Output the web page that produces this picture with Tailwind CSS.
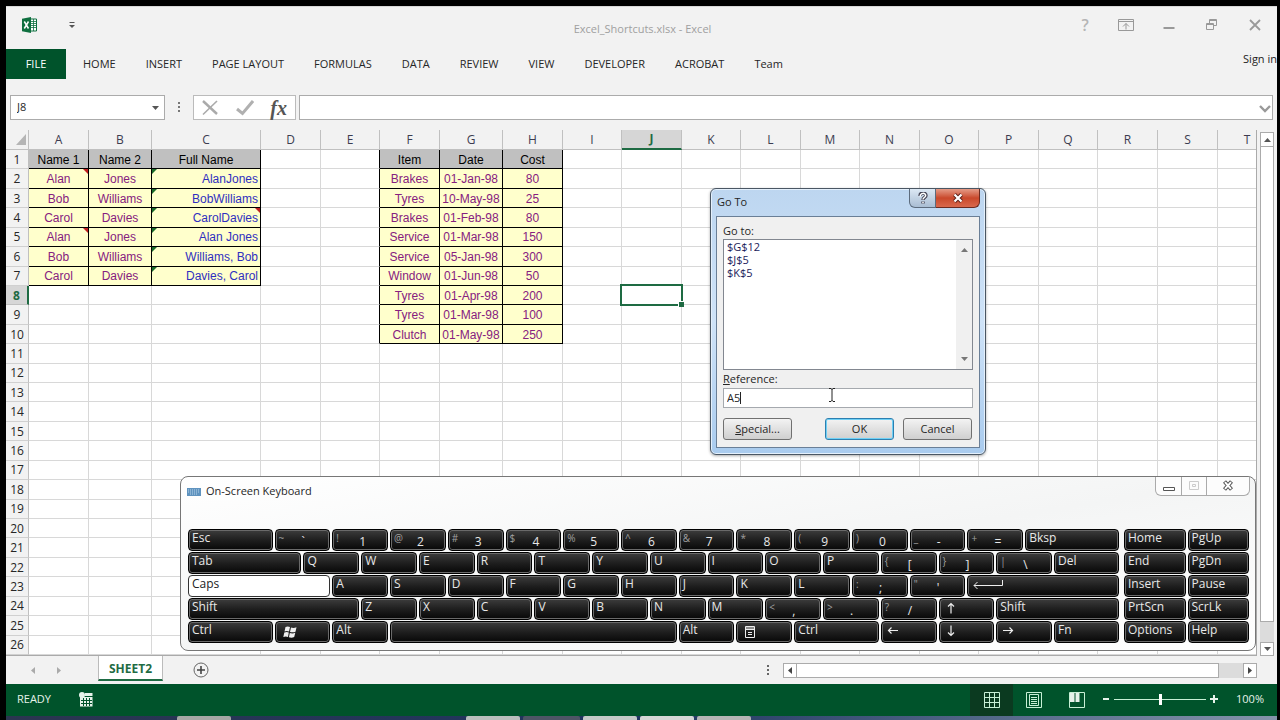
<!DOCTYPE html>
<html lang="en">
<head>
  <meta charset="UTF-8">
  <title>Excel_Shortcuts.xlsx - Excel</title>
  <script src="https://cdn.jsdelivr.net/npm/@tailwindcss/browser@4"></script>
</head>
<body class="relative h-screen overflow-hidden bg-black pt-[6px] pl-[6px] pr-[3px] flex flex-col font-['Open_Sans',sans-serif] text-[11px] text-[#262626] cursor-default">

  <!-- title bar -->
  <header class="h-[43px] shrink-0 bg-[#f2f2f2] border-t border-[#d8d8d8] flex items-center pl-4 pr-[14px]">
    <div class="flex flex-1 items-center gap-[31px] pb-[6px]">
      <svg class="w-[15px] h-4" viewBox="0 0 15 16">
        <path d="M8 2h6.500v12H8z" fill="#fff" stroke="#0f7040" />
        <path d="M9 4.500h5M9 6.500h5M9 8.500h5M9 10.500h5M11.500 2v12" stroke="#0f7040" stroke-width=".8" />
        <path d="M0 1.800L9 0v16L0 14.200z" fill="#0f7040" />
        <path d="M2.300 4.500l4.200 7M6.500 4.500l-4.200 7" stroke="#fff" stroke-width="1.500" />
      </svg>
      <button aria-label="Customize Quick Access Toolbar">
        <svg class="w-2 h-2" viewBox="0 0 8 8"><path d="M1.500 1.500h5" stroke="#555" /><path d="M1 4h6L4 7z" fill="#555" /></svg>
      </button>
    </div>
    <h1 class="pt-[2px] text-[#a0a0a0]">Excel_Shortcuts.xlsx - Excel</h1>
    <div class="flex flex-1 items-center justify-end gap-[27px] pb-[6px] text-[#999]">
      <button aria-label="Help" class="w-3 text-base leading-4 font-semibold text-[#b5b5b5]">?</button>
      <button aria-label="Ribbon Display Options">
        <svg class="w-4 h-4" viewBox="0 0 16 16" fill="none" stroke="currentColor"><path d="M.5 2.500h15v11H.5zM.5 4.500h15M8 12.500V6.500M5 9.500l3-3 3 3" /></svg>
      </button>
      <button aria-label="Minimize">
        <svg class="w-4 h-4" viewBox="0 0 16 16"><path d="M2.500 11h11" stroke="currentColor" stroke-width="2" /></svg>
      </button>
      <button aria-label="Restore Down">
        <svg class="w-4 h-4" viewBox="0 0 16 16" fill="none" stroke="currentColor"><path d="M2.500 6.500h7v6h-7zM2.500 7.500h7M5.500 6V2.500h7v6H10M5.500 3.500h7" /></svg>
      </button>
      <button aria-label="Close">
        <svg class="w-4 h-4" viewBox="0 0 16 16"><path d="M3 3l10 10M13 3L3 13" stroke="currentColor" stroke-width="1.800" /></svg>
      </button>
    </div>
  </header>

  <!-- ribbon tabs -->
  <nav class="h-[30px] shrink-0 bg-[#f2f2f2] flex items-stretch overflow-hidden">
    <button class="w-[60px] pt-px bg-[#00532b] text-white">FILE</button>
    <div id="tabs" class="flex-1 flex items-stretch pl-[2px]"></div>
    <a href="#" class="self-start whitespace-nowrap pt-[2px] text-[#222]">Sign in</a>
  </nav>

  <!-- formula bar -->
  <div class="h-[51px] shrink-0 bg-[#f2f2f2] flex items-start pt-4 pl-1 pr-1">
    <div class="w-[155px] h-[25px] bg-white border border-[#ababab] flex items-center">
      <input aria-label="Name Box" value="J8" class="flex-1 min-w-0 pl-[6px] outline-none">
      <button aria-label="Open Name Box list" class="px-[5px]"><svg class="w-[7px] h-1" viewBox="0 0 7 4"><path d="M0 0h7L3.500 4z" fill="#555" /></svg></button>
    </div>
    <svg class="w-7 h-[25px]" viewBox="0 0 28 25"><path d="M13 7h2v2h-2zM13 11h2v2h-2zM13 15h2v2h-2z" fill="#777" /></svg>
    <div class="w-[103px] h-[25px] bg-white border border-[#bbb] flex items-center justify-between pl-2 pr-2">
      <button aria-label="Cancel entry"><svg class="w-[17px] h-[17px]" viewBox="0 0 17 17"><path d="M1 2l14 13" stroke="#aaa" stroke-width="2.400" /><path d="M15 2L1 15.500" stroke="#aaa" stroke-width="1.600" /></svg></button>
      <button aria-label="Enter"><svg class="w-[18px] h-[17px]" viewBox="0 0 18 17"><path d="M1 10l5.500 4.500L17 2" fill="none" stroke="#b0b0b0" stroke-width="3" /></svg></button>
      <button aria-label="Insert Function" class="font-['Liberation_Serif',serif] italic font-bold text-[20px] leading-5 text-[#555]">fx</button>
    </div>
    <div class="ml-[3px] flex-1 h-[25px] bg-white border border-[#ababab] flex items-center">
      <input aria-label="Formula Bar" class="flex-1 outline-none">
      <button aria-label="Expand Formula Bar" class="pr-px"><svg class="w-3 h-3" viewBox="0 0 12 12"><path d="M1 4l5 5 5-5" fill="none" stroke="#999" stroke-width="2.400" /></svg></button>
    </div>
  </div>

  <!-- worksheet -->
  <main class="flex-1 min-h-0 flex bg-[#f2f2f2]">
    <div class="flex-1 min-w-0 overflow-hidden border-b border-r border-[#aaa]">
      <table id="sheet" class="w-full h-full table-fixed border-separate border-spacing-0 bg-white text-xs leading-4">
        <colgroup>
          <col class="w-[23px]"><col class="w-[60px]"><col class="w-[63px]"><col class="w-[109px]"><col class="w-[60px]">
          <col class="w-[59px]"><col class="w-[60px]"><col class="w-[63px]"><col class="w-[60px]"><col class="w-[59px]">
          <col class="w-[60px]"><col class="w-[59px]"><col class="w-[60px]"><col class="w-[59px]"><col class="w-[60px]">
          <col class="w-[59px]"><col class="w-[60px]"><col class="w-[59px]"><col class="w-[60px]"><col class="w-[60px]">
          <col class="w-[59px]">
        </colgroup>
        <thead></thead>
        <tbody></tbody>
      </table>
    </div>
    <div class="w-5 shrink-0 pt-[2px] pl-[3px] pr-[3px] flex flex-col">
      <button aria-label="Scroll up" class="h-[15px] border border-[#ababab] bg-white flex items-center justify-center"><svg class="w-[7px] h-1" viewBox="0 0 7 4"><path d="M0 4h7L3.500 0z" fill="#555" /></svg></button>
      <div class="flex-1 bg-[#dcdcdc] pb-5"><div class="h-full border border-t-0 border-[#ababab] bg-white"></div></div>
      <button aria-label="Scroll down" class="h-[14px] border border-[#ababab] bg-white flex items-center justify-center"><svg class="w-[7px] h-1" viewBox="0 0 7 4"><path d="M0 0h7L3.500 4z" fill="#555" /></svg></button>
    </div>
  </main>

  <!-- sheet tabs and horizontal scrollbar -->
  <div class="h-7 shrink-0 bg-[#f2f2f2] flex">
    <div class="w-[92px] flex items-center justify-center gap-[22px] pr-3">
      <button aria-label="Previous sheet"><svg class="w-1 h-[7px]" viewBox="0 0 4 7"><path d="M4 0v7L0 3.500z" fill="#aaa" /></svg></button>
      <button aria-label="Next sheet"><svg class="w-1 h-[7px]" viewBox="0 0 4 7"><path d="M0 0v7l4-3.500z" fill="#aaa" /></svg></button>
    </div>
    <button class="w-[65px] h-[25px] pt-[3px] bg-white border-x border-[#bbb] border-b-2 border-b-[#1e6b43] font-bold text-xs text-[#1e6b43]">SHEET2</button>
    <button aria-label="New sheet" class="ml-[30px]"><svg class="w-4 h-4" viewBox="0 0 16 16" fill="none" stroke="#666"><circle cx="8" cy="8" r="7" /><path d="M8 4v8M4 8h8" stroke="#444" stroke-width="1.600" /></svg></button>
    <div class="flex-1"></div>
    <svg class="w-[30px] h-7" viewBox="0 0 30 28"><path d="M14 9h2v2h-2zM14 13h2v2h-2zM14 17h2v2h-2z" fill="#666" /></svg>
    <div class="w-[474px] mt-[7px] mr-5 h-[15px] flex bg-[#dcdcdc]">
      <button aria-label="Scroll left" class="w-[14px] border border-[#ababab] bg-white flex items-center justify-center"><svg class="w-1 h-[7px]" viewBox="0 0 4 7"><path d="M4 0v7L0 3.500z" fill="#444" /></svg></button>
      <div class="flex-1 pr-6"><div class="h-full border border-l-0 border-[#ababab] bg-white"></div></div>
      <button aria-label="Scroll right" class="w-[14px] border border-[#ababab] bg-white flex items-center justify-center"><svg class="w-1 h-[7px]" viewBox="0 0 4 7"><path d="M0 0v7l4-3.500z" fill="#444" /></svg></button>
    </div>
  </div>

  <!-- status bar -->
  <footer class="h-8 shrink-0 bg-[#00532b] text-[#e6f2ea] flex items-stretch pl-[11px] pr-[13px] pb-[2px]">
    <span class="self-center w-[62px]">READY</span>
    <button aria-label="Record macro">
      <svg class="w-[14px] h-[15px]" viewBox="0 0 14 15"><path d="M1 5h12.500v9.500H1z" fill="#e6f2ea" /><path d="M6 1h7.500v3H6z" fill="#e6f2ea" /><path d="M2 8.500h11M2 11.500h11M4.500 6v8M7.500 6v8M10.500 6v8" stroke="#00532b" /><circle cx="3" cy="3" r="3" fill="#e6f2ea" /></svg>
    </button>
    <div class="flex-1"></div>
    <button aria-label="Normal" class="w-[43px] -mb-[2px] bg-[#0b3a20] flex items-center justify-center">
      <svg class="w-4 h-4" viewBox="0 0 16 16" fill="none" stroke="#c8f0d6"><path d="M.5.5h15v15H.5zM5.500.5v15M10.500.5v15M.5 5.500h15M.5 10.500h15" /></svg>
    </button>
    <button aria-label="Page Layout" class="w-[42px] -mb-[2px] flex items-center justify-center">
      <svg class="w-4 h-4" viewBox="0 0 16 16" fill="none" stroke="#c8f0d6"><path d="M.5.5h15v15H.5zM3.500 2.500h9v11h-9zM5 5.500h6M5 7.500h6M5 9.500h6M5 11.500h6" /></svg>
    </button>
    <button aria-label="Page Break Preview" class="w-[43px] -mb-[2px] flex items-center justify-center">
      <svg class="w-4 h-4" viewBox="0 0 16 16" fill="none" stroke="#c8f0d6"><path d="M.5.5h15v15H.5z" /><path d="M1 1h4.500v9H1zM6.500 1h4v9h-4z" fill="#e6f2ea" stroke="none" /></svg>
    </button>
    <div class="ml-1 mr-[18px] flex items-center gap-1">
      <button aria-label="Zoom out"><svg class="w-2 h-2" viewBox="0 0 8 8"><path d="M1 4h6" stroke="#e6f2ea" stroke-width="2" /></svg></button>
      <input type="range" aria-label="Zoom" min="10" max="190" value="100" class="w-[92px] h-4 appearance-none bg-transparent [&::-webkit-slider-runnable-track]:h-px [&::-webkit-slider-runnable-track]:bg-[#c8f0d6] [&::-webkit-slider-thumb]:appearance-none [&::-webkit-slider-thumb]:w-[3px] [&::-webkit-slider-thumb]:h-[11px] [&::-webkit-slider-thumb]:-mt-[5px] [&::-webkit-slider-thumb]:bg-white">
      <button aria-label="Zoom in"><svg class="w-2 h-2" viewBox="0 0 8 8"><path d="M0 4h8M4 0v8" stroke="#e6f2ea" stroke-width="2" /></svg></button>
    </div>
    <button>100%</button>
  </footer>

  <!-- edge of the taskbar -->
  <div class="h-1 shrink-0 bg-gradient-to-r from-[#2b3550] via-[#1f3560] to-[#8494ab] flex gap-[3px] pl-[171px]">
    <div class="w-[54px] bg-[#a5a8a5] rounded-t-xs"></div>
    <div class="w-[229px]"></div>
    <div class="w-[54px] bg-[#b9bfbd] rounded-t-xs"></div>
    <div class="w-[57px] bg-[#4e5566] rounded-t-xs"></div>
    <div class="w-[54px] bg-[#c3c9c7] rounded-t-xs"></div>
    <div class="w-[54px] bg-[#d5d8d6] rounded-t-xs"></div>
    <div class="w-[54px] bg-[#b5b5b5] rounded-t-xs"></div>
  </div>

  <!-- Go To dialog -->
  <section role="dialog" aria-label="Go To" class="absolute left-[710px] top-[188px] w-[276px] flex flex-col rounded-md border border-[#4a5663] bg-gradient-to-b from-[#bdd6f0] via-[#cfe3f8] to-[#a9cbee] px-[5px] pb-[6px] shadow-[inset_0_0_0_1px_#e4f0fc,0_1px_3px_#0005]">
    <div class="h-[27px] flex items-start">
      <h2 class="flex-1 pl-px pt-[5px] leading-4">Go To</h2>
      <button aria-label="Help" class="w-[27px] h-[19px] rounded-bl-md border border-t-0 border-[#5c6b7d] bg-gradient-to-b from-[#dce8f4] to-[#a9bdd3] flex items-center justify-center">
        <svg class="w-3 h-3" viewBox="0 0 12 12" fill="none"><path d="M3 4c0-4 6-4 6-.5C9 5.500 6 5.500 6 8M6 9.500v2" stroke="#445" stroke-width="3.400" /><path d="M3.200 4.500c0-4 5.500-4 5.500-1C8.700 5.500 6 5.500 6 7.500M6 9.800v1.400" stroke="#fff" stroke-width="1.500" /></svg>
      </button>
      <button aria-label="Close" class="w-11 h-[19px] rounded-br-md border border-t-0 border-l-0 border-[#6b2a20] bg-gradient-to-b from-[#e49a86] via-[#c9482b] to-[#d9684c] flex items-center justify-center">
        <svg class="w-3 h-[10px]" viewBox="0 0 12 10"><path d="M2.500 1.500l7 7M9.500 1.500l-7 7" stroke="#5c2018" stroke-width="4" /><path d="M2.500 1.500l7 7M9.500 1.500l-7 7" stroke="#fff" stroke-width="2.200" /></svg>
      </button>
    </div>
    <div class="border border-[#6a7f97] bg-[#f0f0f0] px-[6px] pt-[6px] pb-[7px]">
      <div id="goto-label" class="leading-4">Go to:</div>
      <div class="h-[131px] flex border border-[#828790] bg-white">
        <ul role="listbox" aria-labelledby="goto-label" class="flex-1 pl-[3px] leading-[13px] text-[#1b1b5a]">
          <li role="option">$G$12</li>
          <li role="option">$J$5</li>
          <li role="option">$K$5</li>
        </ul>
        <div class="w-4 bg-[#f0f0f0] flex flex-col justify-between items-center py-2">
          <svg class="w-[7px] h-1" viewBox="0 0 7 4"><path d="M0 4h7L3.500 0z" fill="#777" /></svg>
          <svg class="w-[7px] h-1" viewBox="0 0 7 4"><path d="M0 0h7L3.500 4z" fill="#777" /></svg>
        </div>
      </div>
      <label for="ref" class="block pt-px leading-4"><u>R</u>eference:</label>
      <div class="mt-px h-5 flex items-center border border-[#a5a9ae] bg-white pl-[3px]">
        <input id="ref" value="A5" size="1" class="w-[13px] outline-none">
        <span class="w-px h-3 bg-[#222]"></span>
      </div>
      <div class="flex pt-[10px] pr-px">
        <button class="w-[69px] h-[22px] rounded-[3px] border border-[#707070] bg-gradient-to-b from-[#f3f3f3] to-[#cfcfcf]"><u>S</u>pecial...</button>
        <span class="flex-1"></span>
        <button class="w-[69px] h-[22px] rounded-[3px] border border-[#2c7fb0] bg-gradient-to-b from-[#f3f3f3] to-[#cfcfcf] shadow-[inset_0_0_0_1px_#6fd0f5]">OK</button>
        <button class="ml-[9px] w-[69px] h-[22px] rounded-[3px] border border-[#707070] bg-gradient-to-b from-[#f3f3f3] to-[#cfcfcf]">Cancel</button>
      </div>
    </div>
  </section>
  <!-- text pointer -->
  <svg class="absolute left-[828px] top-[387px] w-2 h-4" viewBox="0 0 8 16" fill="none" stroke="#222"><path d="M1 1.500h2l1 1 1-1h2M4 2v12M1 14.500h2l1-1 1 1h2" /></svg>

  <!-- on-screen keyboard -->
  <section aria-label="On-Screen Keyboard" class="absolute left-[180px] right-[24px] top-[476px] h-[175px] flex flex-col rounded-lg border border-[#777] bg-gradient-to-br from-white via-[#f4f5f5] to-white pl-[6px] pr-[5px]">
    <div class="h-[51px] flex items-start">
      <svg class="mt-[11px] w-[14px] h-2" viewBox="0 0 14 8"><path d="M0 0h14v8H0z" fill="#5f93bf" /><path d="M1 2h12M1 4h12M3 6h8" stroke="#b9d4ea" stroke-dasharray="1 1" /></svg>
      <h2 class="flex-1 pl-[5px] pt-[6px] leading-4">On-Screen Keyboard</h2>
      <div class="h-[19px] flex rounded-b-md border border-t-0 border-[#aaa] bg-white/70 divide-x divide-[#aaa]">
        <button aria-label="Minimize" class="w-[26px] flex items-center justify-center"><svg class="w-3 h-3" viewBox="0 0 12 12"><path d="M.5 7.500h11v3H.5z" fill="#fff" stroke="#555" /></svg></button>
        <button aria-label="Maximize" class="w-[25px] flex items-center justify-center" disabled><svg class="w-3 h-3" viewBox="0 0 12 12" fill="none" stroke="#ccc"><path d="M1.500 1.500h9v8h-9zM4.500 4.500h3v2h-3z" /></svg></button>
        <button aria-label="Close" class="w-[42px] flex items-center justify-center"><svg class="w-3 h-3" viewBox="0 0 12 12"><path d="M2.500 1.500l7 8M9.500 1.500l-7 8" stroke="#555" stroke-width="4" /><path d="M3 2.200l6 6.600M9 2.200l-6 6.600" stroke="#fff" stroke-width="2" /></svg></button>
      </div>
    </div>
    <div class="flex gap-[3px]">
      <div id="keys" class="flex-1 min-w-0"></div>
      <div id="navkeys" class="w-[127px] grid grid-cols-2"></div>
    </div>
  </section>

  <script>
    // ribbon
    const tabs = ["HOME", "INSERT", "PAGE LAYOUT", "FORMULAS", "DATA", "REVIEW", "VIEW", "DEVELOPER", "ACROBAT", "Team"];
    document.getElementById("tabs").innerHTML = tabs.map(t => `<button class="px-[15px] pt-px whitespace-nowrap">${t}</button>`).join("");

    // worksheet
    const cols = "ABCDEFGHIJKLMNOPQRST".split("");
    const data = {
      A: ["Name 1", "Alan", "Bob", "Carol", "Alan", "Bob", "Carol"],
      B: ["Name 2", "Jones", "Williams", "Davies", "Jones", "Williams", "Davies"],
      C: ["Full Name", "AlanJones", "BobWilliams", "CarolDavies", "Alan Jones", "Williams, Bob", "Davies, Carol"],
      F: ["Item", "Brakes", "Tyres", "Brakes", "Service", "Service", "Window", "Tyres", "Tyres", "Clutch"],
      G: ["Date", "01-Jan-98", "10-May-98", "01-Feb-98", "01-Mar-98", "05-Jan-98", "01-Jun-98", "01-Apr-98", "01-Mar-98", "01-May-98"],
      H: ["Cost", "80", "25", "80", "150", "300", "50", "200", "100", "250"],
    };
    const comments = ["A2", "A5", "C4"];
    const redMark = '<i class="absolute right-0 top-0 border-t-[5px] border-l-[5px] border-t-[#c02020] border-l-transparent"></i>';
    const greenMark = '<i class="absolute left-0 top-0 border-t-[5px] border-r-[5px] border-t-[#1a6b2a] border-r-transparent"></i>';
    const selection = '<i class="absolute z-10 -left-[2px] -top-[2px] -right-[2px] -bottom-[2px] border-2 border-[#1e6b43]"></i><i class="absolute z-10 -right-[3px] -bottom-[3px] w-[6px] h-[6px] border-t border-l border-white bg-[#1e6b43]"></i>';

    document.querySelector("#sheet thead").innerHTML = '<tr class="h-5">' +
      '<th aria-label="Select all" class="p-0 bg-[#f2f2f2] border-r border-b border-[#c0c0c0]"><svg class="ml-[10px] w-[10px] h-[11px]" viewBox="0 0 10 11"><path d="M10 0v11H0z" fill="#b5b5b5" /></svg></th>' +
      cols.map(c => c === "J"
        ? `<th class="p-0 bg-[#d6d6d6] border-r border-r-[#c0c0c0] border-b-2 border-b-[#1e6b43] font-bold text-[#1e6b43]">${c}</th>`
        : `<th class="p-0 bg-[#f2f2f2] border-r border-b border-[#c0c0c0] font-normal text-[#3c3c50]">${c}</th>`).join("") + "</tr>";

    let rows = "";
    for (let r = 1; r <= 26; r++) {
      rows += "<tr>" + (r === 8
        ? `<th class="p-0 pt-px bg-[#d6d6d6] border-r-2 border-r-[#1e6b43] border-b border-b-[#c0c0c0] font-bold text-[#1e6b43]">${r}</th>`
        : `<th class="p-0 pt-px bg-[#f2f2f2] border-r border-b border-[#d0d0d0] border-r-[#c0c0c0] font-normal">${r}</th>`);
      for (const c of cols) {
        const text = data[c] && data[c][r - 1];
        let cls = "relative p-0 border-r border-b border-[#d8d8d8]";
        let marks = "";
        if (text) {
          cls = "relative p-0 pt-px border-r border-b border-black font-['Liberation_Sans',sans-serif] whitespace-nowrap ";
          if (r === 1) cls += "bg-[#c0c0c0] text-center text-black";
          else if (c === "C") { cls += "bg-[#ffffcc] text-right pr-[2px] text-[#2f2fc0]"; marks += greenMark; }
          else cls += "bg-[#ffffcc] text-center text-[#86207f]";
          if (comments.includes(c + r)) marks += redMark;
        } else if (c === "E" && r <= 10) {
          cls = "relative p-0 border-r border-b border-[#d8d8d8] border-r-black";
        }
        if (c + r === "J8") marks = selection;
        rows += `<td class="${cls}">${text || ""}${marks}</td>`;
      }
      rows += "</tr>";
    }
    document.querySelector("#sheet tbody").innerHTML = rows;

    // keyboard: [label, width in key units, shifted label]
    const winKey = '<svg class="ml-1 mt-1 w-[14px] h-3" viewBox="0 0 14 12" fill="#eee"><path d="M2.500 1C4 .3 5.500.3 7 1L6 5.500C4.500 4.800 3 4.800 1.500 5.500zM8 1.500c1.500.7 3.500.7 5.500-.3L12.500 5.700c-1.500.8-3.500.8-5.500.2zM1.300 6.500C3 5.800 4.500 5.800 5.800 6.500L5 11C3.500 10.300 2 10.300.3 11zM6.800 7c1.700.6 3.700.6 5.500-.2L11.200 11c-1.700.8-3.500.8-5.300.3z" /></svg>';
    const menuKey = '<svg class="ml-[5px] mt-1 w-[10px] h-3" viewBox="0 0 10 12" fill="none" stroke="#eee"><path d="M.5.5h9v11h-9zM.5 3.500h9M.5 2h9M3 6.500h4M3 8.500h4" /></svg>';
    const enterKey = '<svg class="ml-[2px] mt-1 w-[30px] h-[9px]" viewBox="0 0 30 9" fill="none" stroke="#eee"><path d="M29.500 0v5.500H1M4.500 2L1 5.500 4.500 9" /></svg>';
    const arrow = d => `<svg class="ml-[2px] mt-[3px] w-3 h-3" viewBox="0 0 12 12" fill="none" stroke="#eee" stroke-width="1.200"><path d="${d}" /></svg>`;
    const keyRows = [
      [["Esc", 1.5], ["`", 1, "~"], ["1", 1, "!"], ["2", 1, "@"], ["3", 1, "#"], ["4", 1, "$"], ["5", 1, "%"], ["6", 1, "^"], ["7", 1, "&amp;"], ["8", 1, "*"], ["9", 1, "("], ["0", 1, ")"], ["-", 1, "_"], ["=", 1, "+"], ["Bksp", 1.66]],
      [["Tab", 2], ["Q", 1], ["W", 1], ["E", 1], ["R", 1], ["T", 1], ["Y", 1], ["U", 1], ["I", 1], ["O", 1], ["P", 1], ["[", 1, "{"], ["]", 1, "}"], ["\\", 1, "|"], ["Del", 1.16]],
      [["Caps", 2.5], ["A", 1], ["S", 1], ["D", 1], ["F", 1], ["G", 1], ["H", 1], ["J", 1], ["K", 1], ["L", 1], [";", 1, ":"], ["'", 1, '"'], [enterKey, 2.66]],
      [["Shift", 3], ["Z", 1], ["X", 1], ["C", 1], ["V", 1], ["B", 1], ["N", 1], ["M", 1], [",", 1, "&lt;"], [".", 1, "&gt;"], ["/", 1, "?"], [arrow("M6 11.500V1.500M3 4.500l3-3 3 3"), 1], ["Shift", 2.16]],
      [["Ctrl", 1.5], [winKey, 1], ["Alt", 1], ["", 5], ["Alt", 1], [menuKey, 1], ["Ctrl", 1.5], [arrow("M11 5.500H1.500M4.500 2.500l-3 3 3 3"), 1], [arrow("M6 .5v10M3 7.500l3 3 3-3"), 1], [arrow("M1 5.500h9.500M7.500 2.500l3 3-3 3"), 1], ["Fn", 1.16]],
    ];
    const navKeys = ["Home", "PgUp", "End", "PgDn", "Insert", "Pause", "PrtScn", "ScrLk", "Options", "Help"];

    function key(label, shifted) {
      if (label === "Caps") return `<button class="w-full h-full rounded-[4px] border border-[#333] bg-white text-[#222] pl-[3px] flex items-start text-xs leading-4">Caps</button>`;
      const inner = shifted
        ? `<span class="w-[23px] text-[10px] leading-4 text-left text-[#a0a0a0]">${shifted}</span><span class="pt-1">${label}</span>`
        : label;
      return `<button class="w-full h-full rounded-[4px] border border-black bg-gradient-to-b from-[#3d3d3d] via-[#1f1f1f] to-[#080808] shadow-[inset_0_0_0_1px_#6a6a6a] text-[#e8e8e8] pl-[3px] flex items-start text-xs leading-4">${inner}</button>`;
    }

    document.getElementById("keys").innerHTML = keyRows.map(row => {
      const total = row.reduce((sum, k) => sum + k[1], 0);
      return '<div class="flex h-[23px]">' + row.map(k =>
        `<div class="p-px pb-0" style="width:${k[1] / total * 100}%">${key(k[0], k[2])}</div>`).join("") + "</div>";
    }).join("");
    document.getElementById("navkeys").innerHTML = navKeys.map(k => `<div class="h-[23px] p-px pb-0">${key(k)}</div>`).join("");
  </script>
</body>
</html>
